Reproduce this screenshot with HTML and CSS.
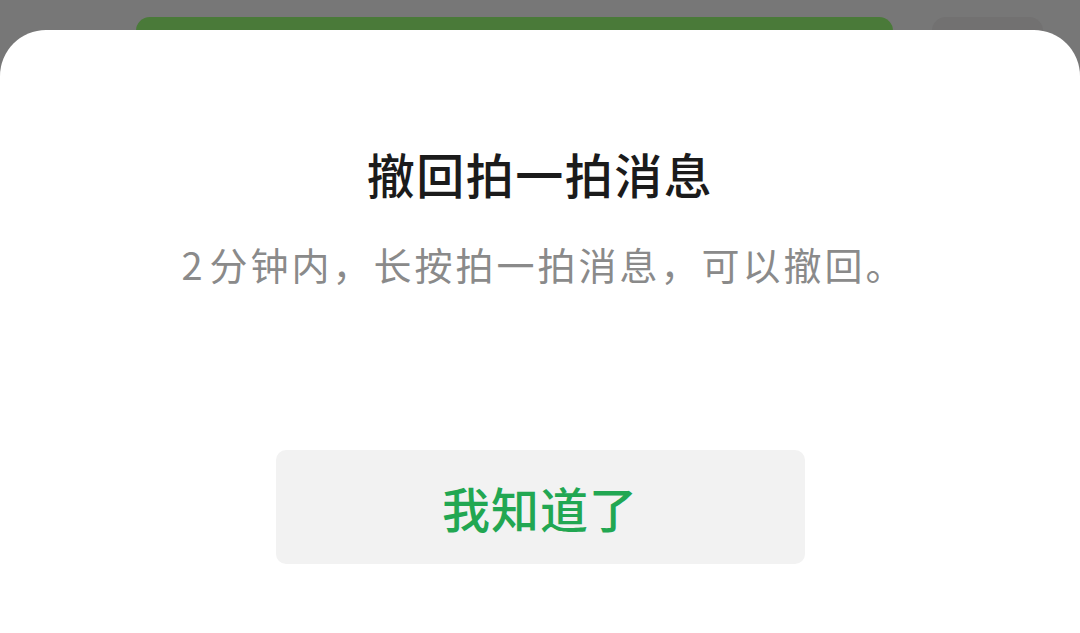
FILE: index.html
```html
<!DOCTYPE html>
<html lang="zh-CN">
<head>
<meta charset="utf-8">
<title>撤回拍一拍消息</title>
<link rel="stylesheet" href="styles.css">
</head>
<body>
<div class="backdrop-row">
  <div class="bg-bar-green"></div>
  <div class="bg-bar-gray"></div>
</div>
<div class="sheet">
  <h1 class="title">撤回拍一拍消息</h1>
  <p class="desc"><span class="num">2</span>分钟内，长按拍一拍消息，可以撤回。</p>
  <button class="ok-btn">我知道了</button>
</div>
</body>
</html>
```

FILE: styles.css
```css
* { box-sizing: border-box; }
html, body {
  margin: 0;
  padding: 0;
  width: 1080px;
  height: 633px;
  overflow: hidden;
}
body {
  background: #777777;
  font-family: "Noto Sans CJK SC", "Noto Sans", sans-serif;
}
.backdrop-row {
  display: flex;
  gap: 39px;
  padding: 17px 0 0 136px;
  height: 30px;
  overflow: visible;
}
.bg-bar-green {
  width: 757px;
  height: 40px;
  flex: none;
  background: #4a7a39;
  border-radius: 14px;
}
.bg-bar-gray {
  width: 111px;
  height: 40px;
  flex: none;
  background: #727171;
  border-radius: 14px;
}
.sheet {
  position: relative;
  z-index: 1;
  height: 603px;
  background: #ffffff;
  border-radius: 46px 46px 0 0;
  display: flex;
  flex-direction: column;
  align-items: center;
  padding-top: 115px;
}
.title {
  margin: 0;
  font-size: 48px;
  line-height: 56px;
  font-weight: 500;
  color: #1b1b1b;
  letter-spacing: 1.5px;
}
.desc {
  margin: 39px 0 0;
  font-size: 38px;
  line-height: 48px;
  font-weight: 400;
  color: #8a8a8a;
  letter-spacing: 3px;
  padding-left: 8px;
}
.num {
  margin-right: 4px;
}
.ok-btn {
  margin-top: 162px;
  width: 529px;
  height: 114px;
  border: none;
  border-radius: 10px;
  background: #f2f2f2;
  color: #22a752;
  font-family: "Noto Sans CJK SC", "Noto Sans", sans-serif;
  font-size: 48px;
  font-weight: 500;
  letter-spacing: 1px;
  padding: 0;
}
```
